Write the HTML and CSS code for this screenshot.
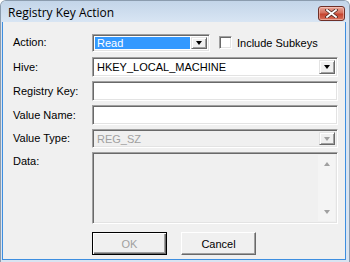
FILE: index.html
```html
<!DOCTYPE html>
<html lang="en">
<head>
    <meta charset="UTF-8">
    <title>Registry Key Action</title>
    <link rel="stylesheet" href="styles.css">
</head>
<body>
    <div class="window">
        <div class="titlebar">
            <span class="title">Registry Key Action</span>
            <button class="close-btn" title="Close">
                <svg width="13" height="9" viewBox="0 0 13 9">
                    <path d="M2 1 L11 8 M11 1 L2 8" stroke="#4a2620" stroke-width="3.4" stroke-linecap="square"/>
                    <path d="M2 1 L11 8 M11 1 L2 8" stroke="#ffffff" stroke-width="1.8" stroke-linecap="square"/>
                </svg>
            </button>
        </div>

        <div class="client">
            <div class="form">
                <label class="label">Action:</label>
                <div class="action-row">
                    <div class="combo combo-action">
                        <div class="combo-text selected">Read</div>
                        <div class="drop-btn"><span class="arrow-down"></span></div>
                    </div>
                    <label class="check">
                        <span class="check-box"></span>
                        <span>Include Subkeys</span>
                    </label>
                </div>

                <label class="label">Hive:</label>
                <div class="combo">
                    <div class="combo-text">HKEY_LOCAL_MACHINE</div>
                    <div class="drop-btn"><span class="arrow-down"></span></div>
                </div>

                <label class="label">Registry Key:</label>
                <div class="edit"></div>

                <label class="label">Value Name:</label>
                <div class="edit"></div>

                <label class="label">Value Type:</label>
                <div class="combo disabled">
                    <div class="combo-text">REG_SZ</div>
                    <div class="drop-btn"><span class="arrow-down"></span></div>
                </div>

                <label class="label label-top">Data:</label>
                <div class="edit memo disabled">
                    <div class="scrollbar">
                        <span class="arrow-up"></span>
                        <span class="arrow-down"></span>
                    </div>
                </div>
            </div>

            <div class="buttons">
                <button class="btn default" disabled>OK</button>
                <button class="btn">Cancel</button>
            </div>
        </div>
    </div>
</body>
</html>
```

FILE: styles.css
```css
body {
    margin: 0;
    padding: 0;
    background: #ffffff;
    font-family: "Liberation Sans", Arial, sans-serif;
    font-size: 11px;
    color: #000;
}

.window {
    width: 350px;
    height: 262px;
    box-sizing: border-box;
    background: #d9e4f1;
    border: 1px solid #8b9cae;
    border-bottom: none;
    border-radius: 6px 6px 0 0;
    padding: 0 3px 2px 1px;
    display: flex;
    flex-direction: column;
}

.titlebar {
    height: 21px;
    display: flex;
    align-items: center;
    background: linear-gradient(#c3d5e9, #d8e5f3);
    border-radius: 5px 5px 0 0;
    margin: 0 -3px 0 -1px;
    padding: 0 4px 0 7px;
}

.title {
    font-family: "Open Sans", "Noto Sans", sans-serif;
    font-size: 12px;
    color: #000;
    margin-top: 1px;
}

.close-btn {
    margin-left: auto;
    margin-top: 3px;
    width: 27px;
    height: 15px;
    padding: 0;
    border: 1px solid #6e3028;
    border-radius: 3px;
    background: linear-gradient(#e9a799 0%, #d66f5c 45%, #c4432e 55%, #d9715c 100%);
    box-shadow: inset 0 0 0 1px rgba(255, 220, 210, 0.5);
    display: flex;
    align-items: center;
    justify-content: center;
}

.client {
    flex: 1;
    background: #f0f0f0;
    border: 1px solid #3d8ee0;
    border-top: none;
    padding: 10px 8px 0 10px;
}

.form {
    display: grid;
    grid-template-columns: 79px 246px;
    grid-template-rows: 21px 20px 20px 20px 19px 72px;
    row-gap: 4px;
}

.label {
    display: flex;
    align-items: center;
    padding-bottom: 1px;
}

.label-top {
    align-items: flex-start;
    padding-top: 3px;
}

.action-row {
    display: flex;
    align-items: center;
}

/* sunken 3D fields */
.combo,
.edit,
.check-box {
    box-sizing: border-box;
    background: #fff;
    border: 1px solid;
    border-color: #a0a0a0 #ffffff #ffffff #a0a0a0;
    box-shadow: inset 1px 1px 0 #696969, inset -1px -1px 0 #e3e3e3;
}

.combo {
    display: flex;
    align-items: stretch;
    padding: 2px;
}

.combo-action {
    width: 118px;
}

.combo-text {
    flex: 1;
    display: flex;
    align-items: center;
    padding-left: 2px;
    margin-right: 1px;
}

.combo-text.selected {
    background: #3399ff;
    color: #fff;
}

.drop-btn {
    width: 16px;
    box-sizing: border-box;
    background: #f0f0f0;
    border: 1px solid;
    border-color: #e3e3e3 #696969 #696969 #e3e3e3;
    box-shadow: inset 1px 1px 0 #fff, inset -1px -1px 0 #a0a0a0;
    display: flex;
    align-items: center;
    justify-content: center;
}

.arrow-down,
.arrow-up {
    width: 0;
    height: 0;
    border-left: 3.5px solid transparent;
    border-right: 3.5px solid transparent;
}

.arrow-down {
    border-top: 4px solid #000;
}

.arrow-up {
    border-bottom: 4px solid #000;
}

.disabled {
    background: #f0f0f0;
    color: #a0a0a0;
}

.disabled .arrow-down,
.disabled .arrow-up {
    border-top-color: #a0a0a0;
    border-bottom-color: #a0a0a0;
}

.disabled .arrow-down {
    border-bottom: none;
}

.disabled .arrow-up {
    border-top: none;
}

.check {
    display: flex;
    align-items: center;
    margin-left: 9px;
}

.check-box {
    width: 13px;
    height: 13px;
    margin-right: 5px;
}

.memo {
    display: flex;
    justify-content: flex-end;
    padding: 2px;
}

.scrollbar {
    width: 17px;
    background: #f4f4f4;
    display: flex;
    flex-direction: column;
    align-items: center;
    justify-content: space-between;
    padding: 7px 0 7px;
}

.buttons {
    display: flex;
    justify-content: center;
    gap: 14px;
    margin-top: 8px;
    padding-right: 2px;
}

.btn {
    width: 75px;
    height: 23px;
    box-sizing: border-box;
    font-family: "Liberation Sans", Arial, sans-serif;
    font-size: 11px;
    color: #000;
    background: #f0f0f0;
    border: 1px solid;
    border-color: #fff #696969 #696969 #fff;
    box-shadow: inset -1px -1px 0 #a0a0a0;
    padding: 0;
}

.btn.default {
    border: 1px solid #000;
    box-shadow: inset 1px 1px 0 #fff, inset -1px -1px 0 #696969, inset -2px -2px 0 #a0a0a0;
}

.btn:disabled {
    color: #a0a0a0;
}
```
